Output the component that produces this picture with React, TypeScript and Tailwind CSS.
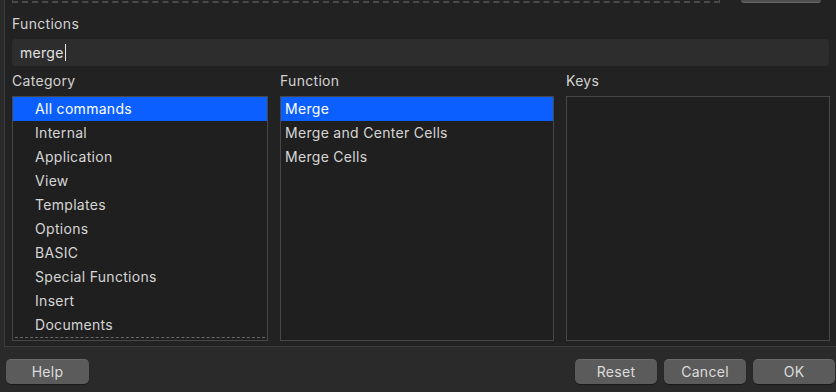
import React from "react";

const categories = [
  "All commands",
  "Internal",
  "Application",
  "View",
  "Templates",
  "Options",
  "BASIC",
  "Special Functions",
  "Insert",
  "Documents",
];

const functions = ["Merge", "Merge and Center Cells", "Merge Cells"];

function Btn({ label, w }: { label: string; w: string }) {
  return (
    <div
      className={`${w} h-[25px] rounded-[5px] bg-[#5b5b5b] border-t border-[#6a6a6a] flex items-center justify-center pb-[1px] text-[14px] tracking-[0.3px] text-[#dcdcdc] shadow-[0_1px_1px_rgba(0,0,0,0.4)]`}
    >
      {label}
    </div>
  );
}

export default function App() {
  return (
    <div
      className="w-[836px] h-[392px] bg-[#2a2a2a] overflow-hidden flex flex-col tracking-[0.3px]"
      style={{ fontFamily: "Inter, 'Noto Sans', sans-serif" }}
    >
      <div className="ml-[4px] h-[347px] border-l border-b border-[#3c3c3c] bg-[#222222] flex flex-col pl-[7px] pr-[6px]">
        {/* partial top row */}
        <div className="h-[3px] flex items-end">
          <div className="w-[708px] h-[3px] border-b-2 border-x border-dashed border-[#4a4a4a]" />
          <div className="ml-[21px] w-[80px] h-[3px] rounded-b-[4px] bg-[#4f4f4f] border-b border-[#666]" />
        </div>
        <div className="mt-[11px] h-[20px] leading-[20px] text-[14px] text-[#d2d2d2]">Functions</div>
        <div className="mt-[5px] h-[27px] w-[817px] rounded-[4px] bg-[#2d2d2d] flex items-center pl-[8px] pb-[1px] text-[14px] text-[#e2e2e2]">
          <span>merge</span>
          <span className="w-px h-[17px] bg-[#e8e8e8] ml-[1px]" />
        </div>
        <div className="mt-[5px] flex gap-[12px]">
          {/* Category */}
          <div className="w-[256px] flex flex-col">
            <div className="h-[20px] leading-[20px] text-[14px] text-[#d2d2d2]">Category</div>
            <div className="mt-[5px] h-[245px] border border-[#474747] bg-[#1f1f1f] flex flex-col overflow-hidden">
              {categories.map((c, i) => (
                <div
                  key={c}
                  className={`h-[24px] shrink-0 flex items-center pl-[22px] pb-[2px] text-[14px] ${
                    i === 0 ? "bg-[#0a5ffe] text-white" : "text-[#d6d6d6]"
                  }`}
                >
                  {c}
                </div>
              ))}
              <div className="h-[4px] shrink-0 border-t border-dashed border-[#6a6a6a] mx-[2px]" />
            </div>
          </div>
          {/* Function */}
          <div className="w-[274px] flex flex-col">
            <div className="h-[20px] leading-[20px] text-[14px] text-[#d2d2d2]">Function</div>
            <div className="mt-[5px] h-[245px] border border-[#474747] bg-[#1f1f1f] flex flex-col">
              {functions.map((f, i) => (
                <div
                  key={f}
                  className={`h-[24px] flex items-center pl-[4px] pb-[2px] text-[14px] ${
                    i === 0 ? "bg-[#0a5ffe] text-white" : "text-[#d6d6d6]"
                  }`}
                >
                  {f}
                </div>
              ))}
            </div>
          </div>
          {/* Keys */}
          <div className="w-[264px] flex flex-col">
            <div className="h-[20px] leading-[20px] text-[14px] text-[#d2d2d2]">Keys</div>
            <div className="mt-[5px] h-[245px] border border-[#474747] bg-[#1f1f1f]" />
          </div>
        </div>
      </div>
      <div className="mt-[12px] flex items-start px-[6px]">
        <Btn label="Help" w="w-[83px]" />
        <div className="flex-1" />
        <div className="flex gap-[7px] mr-[-5px]">
          <Btn label="Reset" w="w-[82px]" />
          <Btn label="Cancel" w="w-[82px]" />
          <Btn label="OK" w="w-[82px]" />
        </div>
      </div>
    </div>
  );
}
